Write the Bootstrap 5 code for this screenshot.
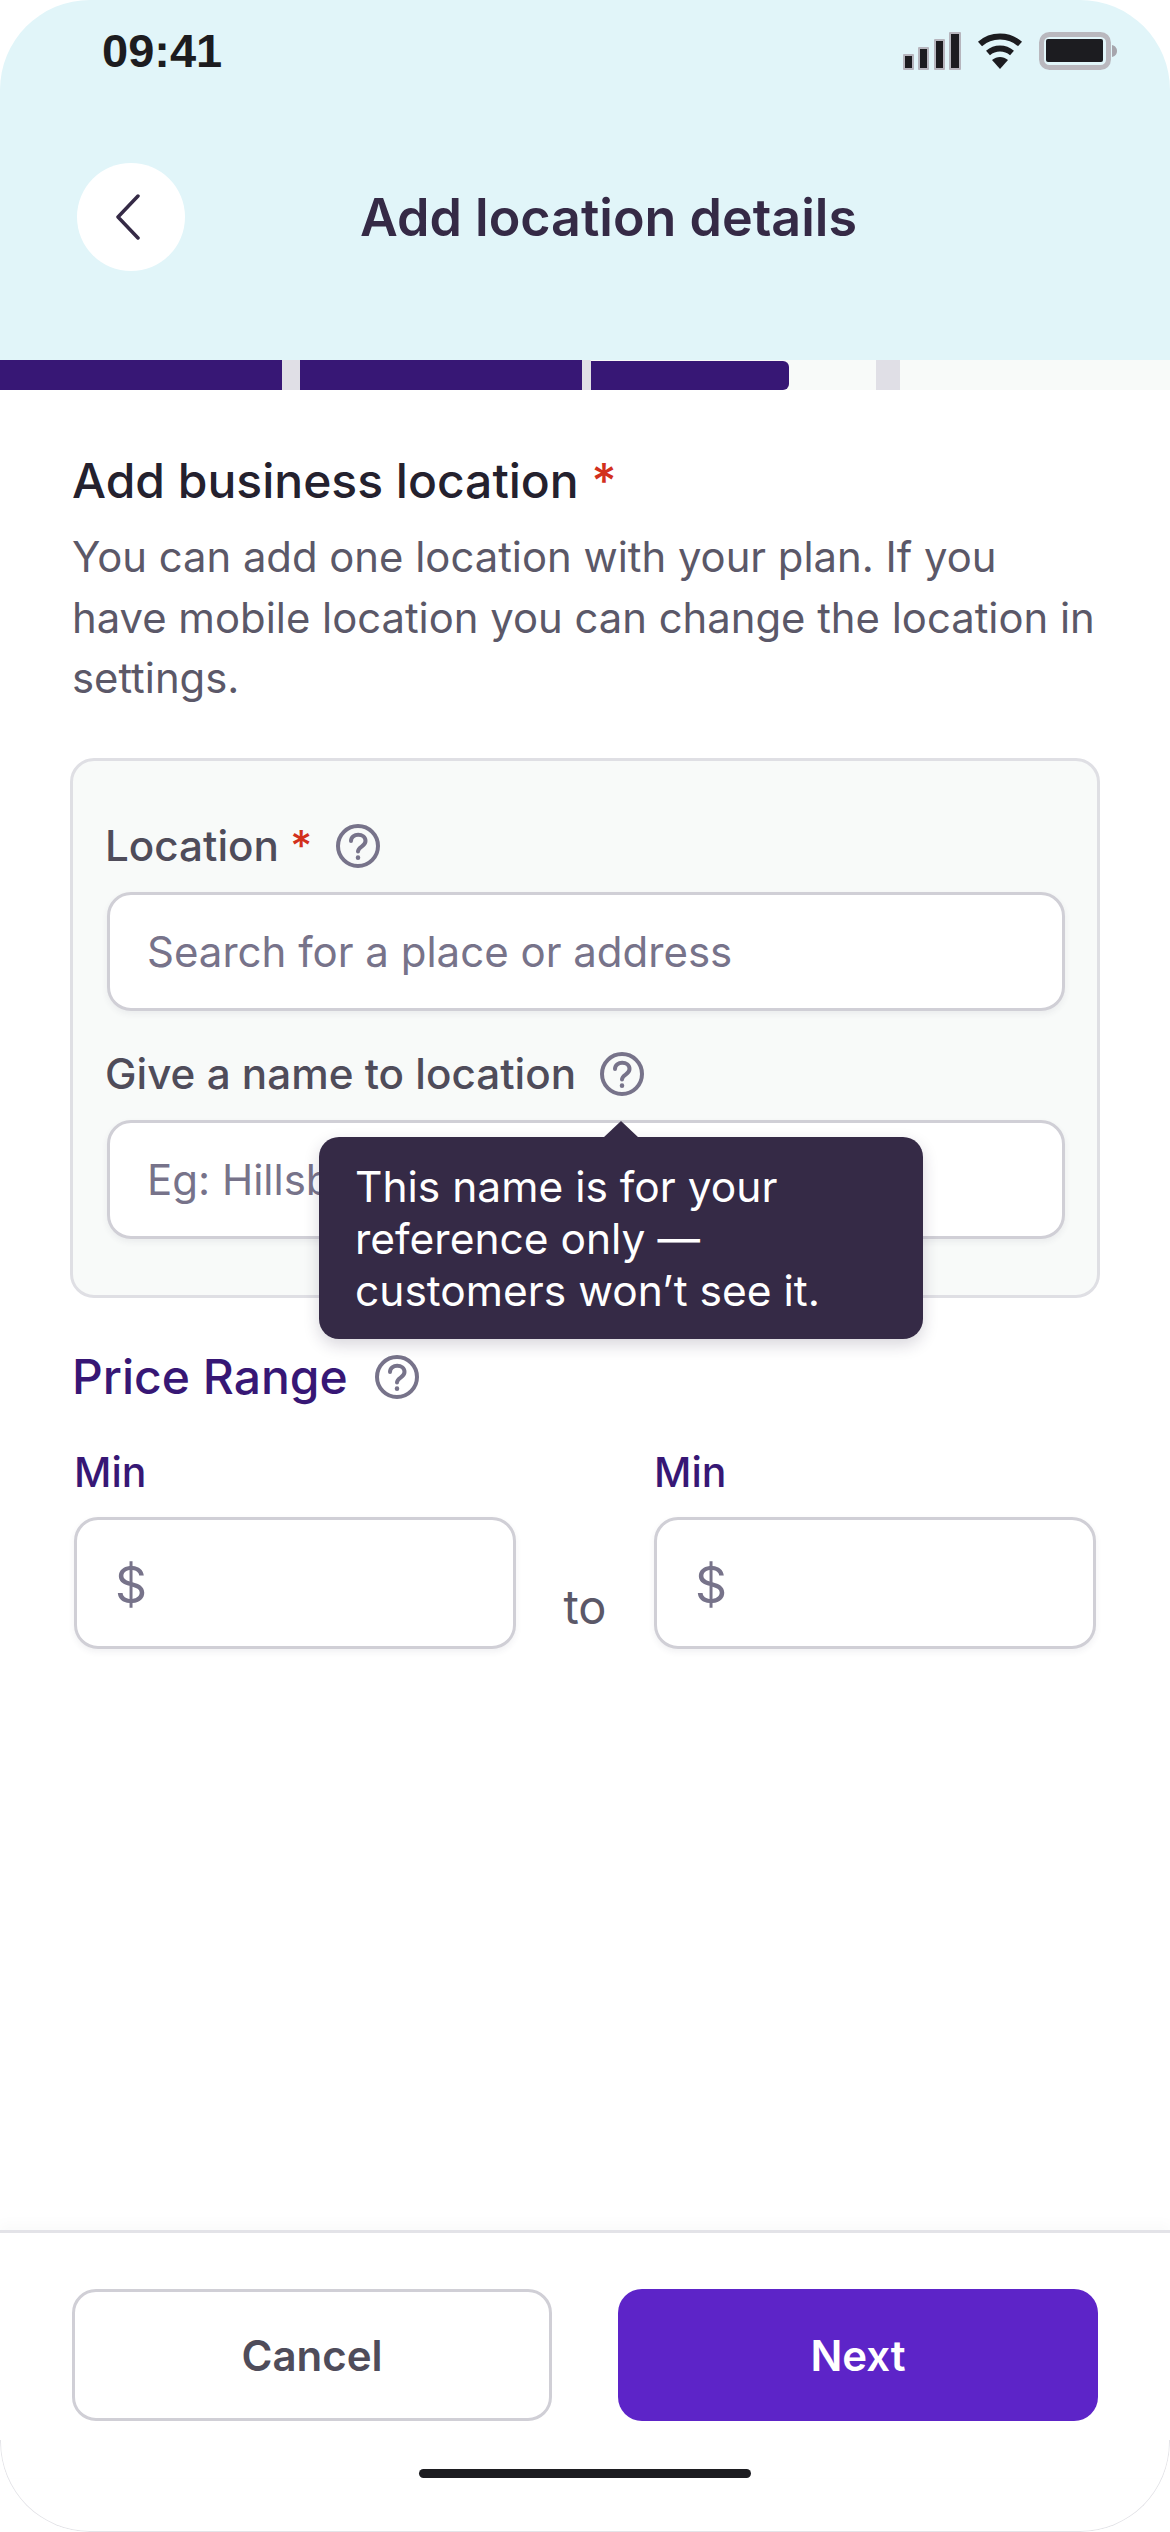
<!DOCTYPE html>
<html lang="en">
<head>
<meta charset="UTF-8">
<meta name="viewport" content="width=device-width, initial-scale=1.0">
<title>Add location details</title>
<link href="https://cdn.jsdelivr.net/npm/bootstrap@5.3.0/dist/css/bootstrap.min.css" rel="stylesheet">
<style>
html, body { margin: 0; background: #fff; }
body { font-family: Inter, "Liberation Sans", sans-serif; }
.phone { position: relative; width: 1170px; height: 2532px; border-radius: 90px; overflow: hidden; background: #fff; }
.phone::after { content: ""; position: absolute; left: 0; right: 0; bottom: 0; height: 92px; border: 1px solid #e4e4e8; border-top: 0; border-radius: 0 0 90px 90px; pointer-events: none; }
.top-area { height: 360px; background: #e1f5f9; padding: 32px 52px 0 77px; }
.status-row { height: 38px; }
.clock { font-family: "Liberation Sans", sans-serif; font-weight: 700; font-size: 47px; line-height: 36px; color: #1c1c20; margin-left: 25px; }
.title-row { margin-top: 93px; height: 108px; }
.back-btn { width: 108px; height: 108px; border: 0; }
.back-btn svg { margin-right: 6px; }
.page-title { font-size: 52px; font-weight: 600; color: #352a46; line-height: 62px; margin: 2px 0 0 175px; }
.steps { height: 30px; background: #f8faf9; }
.step-done { width: 282px; background: #371775; }
.step-gap { width: 18px; background: #e0dfe6; }
.step-gap-thin { width: 9px; background: #e0dfe6; }
.step-now { width: 198px; margin-top: 1px; background: #371775; border-radius: 0 6px 6px 0; }
.step-rest { width: 87px; }
.step-sep { width: 24px; background: #e0dfe6; }
.main-area { padding: 63px 73px 0 72px; }
.sec-title { font-size: 48px; font-weight: 500; line-height: 56px; color: #24212e; margin: 0; }
.req { color: #d2301c; }
.sec-text { font-size: 41.8px; line-height: 60.5px; color: #5b5868; margin: 18px -5px 0 0; }
.loc-box { margin: 49px -3px 0 -2px; height: 540px; padding: 0 32px 0 34px; background: #f8faf9; border: 3px solid #dfdfe4; border-radius: 24px; }
.fld-label { font-size: 42.2px; font-weight: 500; line-height: 50px; color: #4f4c5a; gap: 24px; margin-left: -2px; }
.fld-label svg { flex: none; }
.first-label { margin-top: 60px; }
.second-label { margin-top: 38px; }
.fld-input.form-control { height: 119px; margin-top: 21px; padding: 0 37px; font-size: 42px; color: #4f4c5a; background: #fff; border: 3px solid #d0cfd6; border-radius: 24px; box-shadow: 0 3px 6px rgba(60, 60, 80, .07); }
.fld-input.form-control::placeholder { color: #77738a; opacity: 1; }
.name-wrap { position: relative; }
.tip-box { position: absolute; left: 212px; top: 17px; width: 604px; height: 202px; padding: 24px 36px; background: #352a46; color: #fff; font-size: 42.5px; line-height: 52px; border-radius: 20px; box-shadow: 0 6px 16px rgba(40, 30, 60, .18); z-index: 5; }
.tip-box::before { content: ""; position: absolute; left: 284px; top: -16px; border: solid transparent; border-width: 0 18px 17px; border-bottom-color: #352a46; }
.price-title { font-size: 48px; font-weight: 500; line-height: 56px; color: #371775; margin-top: 51px; gap: 27px; }
.price-row { margin-top: 42px; margin-left: 2px; }
.price-col { width: 442px; }
.price-label { font-size: 41px; font-weight: 500; line-height: 50px; color: #371775; margin-bottom: 20px; }
.price-input.form-control { height: 132px; padding: 4px 38px 0; font-size: 50px; background: #fff; border: 3px solid #d0cfd6; border-radius: 24px; box-shadow: 0 3px 6px rgba(60, 60, 80, .07); }
.price-input.form-control::placeholder { color: #77738a; opacity: 1; }
.to-text { width: 138px; font-size: 47px; line-height: 56px; color: #5b5868; padding-bottom: 14px; }
.bottom-bar { border-top: 3px solid #e3e3e8; box-shadow: 0 -6px 10px rgba(120, 120, 140, .04); padding: 56px 72px 0; }
.bar-btn.btn { width: 480px; height: 132px; font-size: 42px; font-weight: 600; border-radius: 24px; }
.btn-cancel.btn { background: #fff; color: #4f4c5a; border: 3px solid #d0cfd6; }
.btn-next.btn { background: #5d24c8; color: #fff; border: 0; }
.home-bar { width: 332px; height: 9px; background: #1c1c20; border-radius: 5px; margin: 48px auto 0; }
.end-gap { height: 54px; }
</style>
</head>
<body>
<div class="phone d-flex flex-column">
  <div class="top-area">
    <div class="status-row d-flex align-items-center justify-content-between">
      <span class="clock">09:41</span>
      <div class="d-flex align-items-center">
        <svg width="58" height="38" viewBox="0 0 58 38"><g fill="#b6b5bd"><rect x="0" y="22" width="11" height="16" rx="1"/><rect x="15" y="15" width="11" height="23" rx="1"/><rect x="31" y="7" width="11" height="31" rx="1"/><rect x="46" y="0" width="12" height="38" rx="1"/></g><g fill="#1c1c20"><rect x="2" y="24" width="7" height="12"/><rect x="17" y="17" width="7" height="19"/><rect x="33" y="9" width="7" height="27"/><rect x="48" y="2" width="8" height="34"/></g></svg>
        <svg class="ms-3" width="46" height="38" viewBox="0 0 46 38" fill="none" stroke="#1c1c20" stroke-width="6"><path d="M3 12 C14 2 32 2 43 12"/><path d="M11 21 C18 15 28 15 35 21"/><path d="M15 28 L23 37 L31 28 C26 24 20 24 15 28Z" fill="#1c1c20" stroke="none"/></svg>
        <svg class="ms-3" width="79" height="38" viewBox="0 0 79 38"><rect x="2.5" y="2.5" width="67" height="33" rx="8" fill="none" stroke="#b9b8be" stroke-width="5"/><rect x="7" y="7" width="57" height="23" rx="2" fill="#1c1c20"/><path d="M73 13 C77 14 78 17 78 19 C78 21 77 24 73 25Z" fill="#a6a5ac"/></svg>
      </div>
    </div>
    <div class="title-row d-flex align-items-center">
      <button type="button" class="back-btn btn bg-white rounded-circle d-flex align-items-center justify-content-center p-0" aria-label="Back">
        <svg width="24" height="46" viewBox="0 0 24 46" fill="none" stroke="#352a46" stroke-width="3.5" stroke-linecap="round" stroke-linejoin="round"><path d="M22 2 L2 23 L22 44"/></svg>
      </button>
      <h1 class="page-title">Add location details</h1>
    </div>
  </div>

  <div class="steps d-flex">
    <div class="step-done"></div>
    <div class="step-gap"></div>
    <div class="step-done"></div>
    <div class="step-gap-thin"></div>
    <div class="step-now"></div>
    <div class="step-rest"></div>
    <div class="step-sep"></div>
  </div>

  <div class="main-area flex-grow-1">
    <h2 class="sec-title">Add business location <span class="req">*</span></h2>
    <p class="sec-text">You can add one location with your plan. If you have mobile location you can change the location in settings.</p>

    <div class="loc-box">
      <div class="fld-label first-label d-flex align-items-center">
        <span>Location <span class="req">*</span></span>
        <svg width="44" height="44" viewBox="0 0 44 44" fill="none" stroke="#77738a" stroke-width="4" stroke-linecap="round"><circle cx="22" cy="22" r="20"/><path d="M15 17 C15 8.500 29.500 9 29.500 17 C29.500 22.500 22 22.500 22 27.500"/><path d="M22 33.500 L22 33.700" stroke-width="4.500"/></svg>
      </div>
      <input class="fld-input form-control" type="text" placeholder="Search for a place or address">
      <div class="fld-label second-label d-flex align-items-center">
        <span>Give a name to location</span>
        <svg width="44" height="44" viewBox="0 0 44 44" fill="none" stroke="#77738a" stroke-width="4" stroke-linecap="round"><circle cx="22" cy="22" r="20"/><path d="M15 17 C15 8.500 29.500 9 29.500 17 C29.500 22.500 22 22.500 22 27.500"/><path d="M22 33.500 L22 33.700" stroke-width="4.500"/></svg>
      </div>
      <div class="name-wrap">
        <input class="fld-input form-control" type="text" placeholder="Eg: Hillsboro Studio">
        <div class="tip-box" role="tooltip">This name is for your reference only — customers won’t see it.</div>
      </div>
    </div>

    <div class="price-title d-flex align-items-center">
      <span>Price Range</span>
      <svg width="44" height="44" viewBox="0 0 44 44" fill="none" stroke="#77738a" stroke-width="4" stroke-linecap="round"><circle cx="22" cy="22" r="20"/><path d="M15 17 C15 8.500 29.500 9 29.500 17 C29.500 22.500 22 22.500 22 27.500"/><path d="M22 33.500 L22 33.700" stroke-width="4.500"/></svg>
    </div>

    <div class="price-row d-flex align-items-end">
      <div class="price-col">
        <div class="price-label">Min</div>
        <input class="price-input form-control" type="text" placeholder="$">
      </div>
      <div class="to-text text-center">to</div>
      <div class="price-col">
        <div class="price-label">Min</div>
        <input class="price-input form-control" type="text" placeholder="$">
      </div>
    </div>
  </div>

  <div class="bottom-bar">
    <div class="d-flex justify-content-between">
      <button type="button" class="bar-btn btn btn-cancel">Cancel</button>
      <button type="button" class="bar-btn btn btn-next">Next</button>
    </div>
    <div class="home-bar"></div>
  </div>
  <div class="end-gap"></div>
</div>
<script src="https://cdn.jsdelivr.net/npm/bootstrap@5.3.0/dist/js/bootstrap.bundle.min.js"></script>
</body>
</html>
